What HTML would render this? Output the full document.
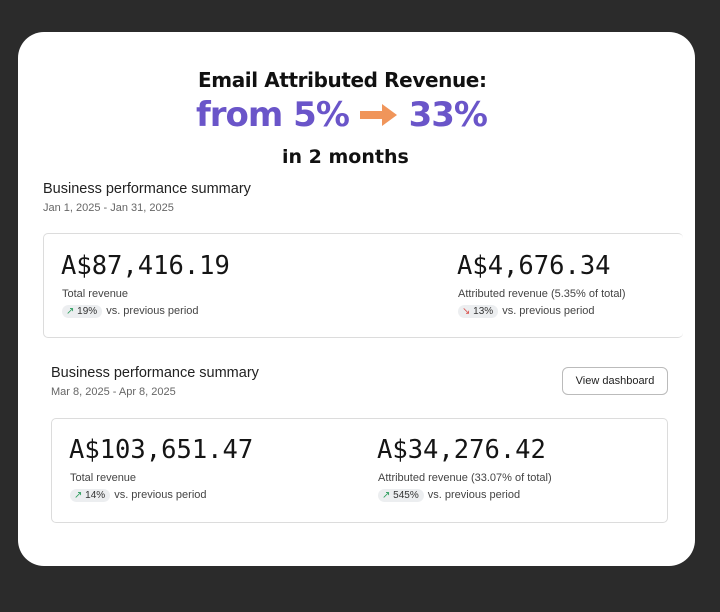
<!DOCTYPE html>
<html><head><meta charset="utf-8"><style>
*{margin:0;padding:0;box-sizing:border-box}
body{width:720px;height:612px;background:#2b2b2b;position:relative;overflow:hidden;font-family:"Liberation Sans",sans-serif;color:#222}
.panel{position:absolute;left:18px;top:32px;width:677px;height:534px;background:#fff;border-radius:26px}
.a{position:absolute;white-space:nowrap}
.t1{left:198px;top:68px;font-size:20px;font-weight:bold;color:#111;font-family:"DejaVu Sans",sans-serif;letter-spacing:-0.4px}
.t2{top:95px;left:196px;font-size:34px;font-weight:bold;color:#6a55c9;font-family:"DejaVu Sans",sans-serif;letter-spacing:-1px}
.t3{left:282px;top:146px;font-size:19px;font-weight:bold;color:#111;font-family:"DejaVu Sans",sans-serif}
.h{font-size:14.5px;color:#222}
.d{font-size:11px;color:#666}
.card{position:absolute;border:1px solid #dcdcdc;border-radius:5px;background:#fff}
.big{font-family:"DejaVu Sans Mono",monospace;font-size:25.5px;color:#151515}
.lbl{font-size:11px;color:#444}
.pill{display:inline-block;background:#eceef0;border-radius:9px;padding:1px 5px 1px 4px;font-size:10px;color:#333;margin-right:4px}
.cmp{font-size:11px;color:#444}
.btn{position:absolute;left:562px;top:367px;width:106px;height:28px;border:1px solid #bbb;border-radius:6px;font-size:11px;text-align:center;line-height:26px;color:#222}
</style></head><body>
<div class="panel"></div>
<div class="a t1">Email Attributed Revenue:</div>
<div class="a t2">from 5% <svg width="38" height="24" viewBox="0 0 38 24" style="vertical-align:-1px"><path d="M0 8h22V1l15 11-15 11v-7H0z" fill="#f0955a"/></svg> 33%</div>
<div class="a t3">in 2 months</div>

<div class="a h" style="left:43px;top:181px">Business performance summary</div>
<div class="a d" style="left:43px;top:202px">Jan 1, 2025 - Jan 31, 2025</div>
<div class="card" style="left:43px;top:233px;width:640px;height:105px;border-right:none"></div>
<div class="a big" style="left:61px;top:251px">A$87,416.19</div>
<div class="a lbl" style="left:62px;top:288px">Total revenue</div>
<div class="a cmp" style="left:62px;top:305px"><span class="pill"><span style="color:#2a9d5c">↗</span> 19%</span>vs. previous period</div>
<div class="a big" style="left:457px;top:251px">A$4,676.34</div>
<div class="a lbl" style="left:458px;top:288px">Attributed revenue (5.35% of total)</div>
<div class="a cmp" style="left:458px;top:305px"><span class="pill"><span style="color:#d9534f">↘</span> 13%</span>vs. previous period</div>

<div class="a h" style="left:51px;top:365px">Business performance summary</div>
<div class="a d" style="left:51px;top:386px">Mar 8, 2025 - Apr 8, 2025</div>
<div class="btn">View dashboard</div>
<div class="card" style="left:51px;top:418px;width:617px;height:105px"></div>
<div class="a big" style="left:69px;top:435px">A$103,651.47</div>
<div class="a lbl" style="left:70px;top:472px">Total revenue</div>
<div class="a cmp" style="left:70px;top:489px"><span class="pill"><span style="color:#2a9d5c">↗</span> 14%</span>vs. previous period</div>
<div class="a big" style="left:377px;top:435px">A$34,276.42</div>
<div class="a lbl" style="left:378px;top:472px">Attributed revenue (33.07% of total)</div>
<div class="a cmp" style="left:378px;top:489px"><span class="pill"><span style="color:#2a9d5c">↗</span> 545%</span>vs. previous period</div>
</body></html>
